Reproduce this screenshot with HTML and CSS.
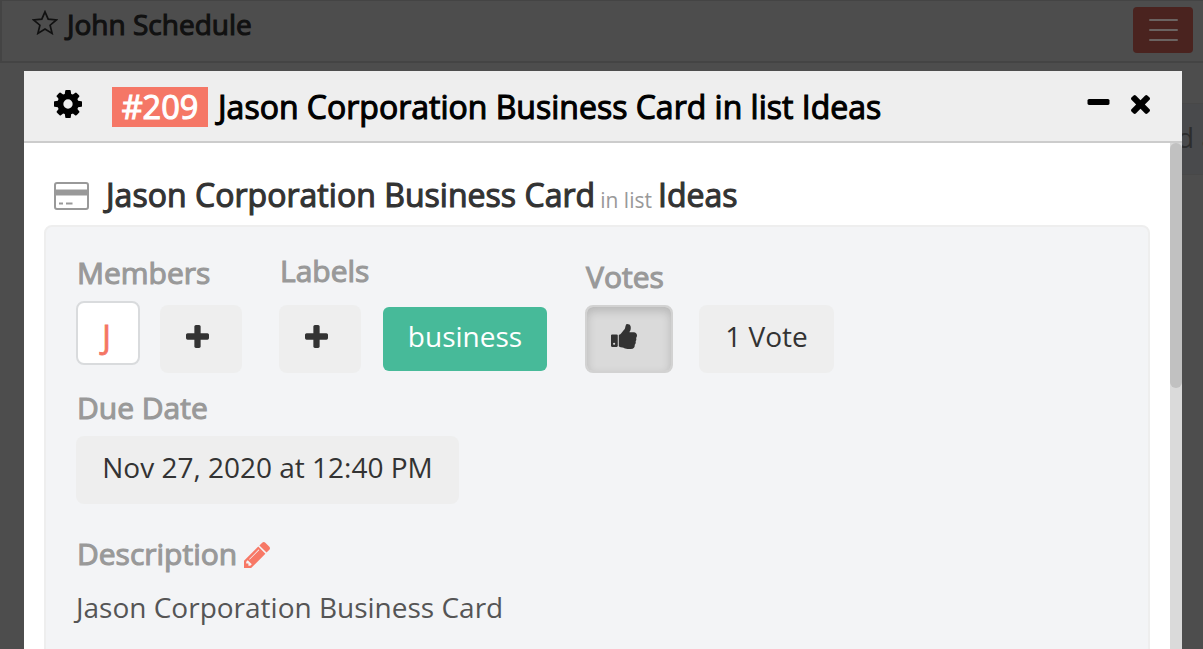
FILE: index.html
```html
<!DOCTYPE html>
<html lang="en">
<head>
<meta charset="utf-8">
<title>John Schedule</title>
<link rel="stylesheet" href="styles.css">
</head>
<body>
<svg class="defs" aria-hidden="true">
  <symbol id="plus" viewBox="192 128 1408 1408"><path d="M1600 736v192q0 40-28 68t-68 28h-416v416q0 40-28 68t-68 28h-192q-40 0-68-28t-28-68v-416h-416q-40 0-68-28t-28-68v-192q0-40 28-68t68-28h416v-416q0-40 28-68t68-28h192q40 0 68 28t28 68v416h416q40 0 68 28t28 68z"/></symbol>
</svg>
<div class="board">
  <header class="navbar">
    <div class="brand">
      <svg class="star" viewBox="0 0 26 25"><path d="M13 1.800l3.200 7.400 8.200.700-6.300 5.300 2 8.200-7.100-4.400-7.100 4.400 2-8.200L1.600 9.900l8.200-.7z"/></svg>
      <span class="strong brand-name">John Schedule</span>
    </div>
    <div class="menu"><i></i><i></i><i></i></div>
  </header>
  <div class="add-list"><span>d a</span></div>
</div>
<section class="modal">
  <header class="modal-head">
    <svg class="cog" viewBox="128 128 1536 1536"><path d="M1152 896q0-106-75-181t-181-75-181 75-75 181 75 181 181 75 181-75 75-181zm512-109v222q0 12-8 23t-20 13l-185 28q-19 54-39 91 35 50 107 138 10 12 10 25t-9 23q-27 37-99 108t-94 71q-12 0-26-9l-138-108q-44 23-91 38-16 136-29 186-7 28-36 28h-222q-14 0-24.500-8.500t-11.500-21.500l-28-184q-49-16-90-37l-141 107q-10 9-25 9-14 0-25-11-126-114-165-168-7-10-7-23 0-12 8-23 15-21 51-66.500t54-70.500q-27-50-41-99l-183-27q-13-2-21-12.500t-8-23.500v-222q0-12 8-23t19-13l186-28q14-46 39-92-40-57-107-138-10-12-10-24 0-10 9-23 26-36 98.500-107.500t94.500-71.500q13 0 26 10l138 107q44-23 91-38 16-136 29-186 7-28 36-28h222q14 0 24.500 8.500t11.500 21.500l28 184q49 16 90 37l142-107q9-9 24-9 13 0 25 10 129 119 165 170 7 8 7 22 0 12-8 23-15 21-51 66.500t-54 70.500q26 50 41 98l183 28q13 2 21 12.500t8 23.500z"/></svg>
    <span class="badge strong">#209</span>
    <h1 class="strong title">Jason Corporation Business Card in list Ideas</h1>
    <svg class="minus" viewBox="192 640 1408 384"><path d="M1600 736v192q0 40-28 68t-68 28h-1216q-40 0-68-28t-28-68v-192q0-40 28-68t68-28h1216q40 0 68 28t28 68z"/></svg>
    <svg class="times" viewBox="302 366 1188 1188"><path d="M1490 1322q0 40-28 68l-136 136q-28 28-68 28t-68-28l-294-294-294 294q-28 28-68 28t-68-28l-136-136q-28-28-28-68t28-68l294-294-294-294q-28-28-28-68t28-68l136-136q28-28 68-28t68 28l294 294 294-294q28-28 68-28t68 28l136 136q28 28 28 68t-28 68l-294 294 294 294q28 28 28 68z"/></svg>
  </header>
  <div class="modal-body">
    <div class="content">
      <div class="card-title">
        <svg class="card-icon" viewBox="0 0 35 28"><rect x="1" y="1" width="33" height="26" rx="2"/><path class="fill" d="M1 7.500h33v6H1zM5 20.500h4v2H5zM12 20.500h6.500v2H12z"/></svg>
        <h2 class="strong card-name">Jason Corporation Business Card</h2>
        <span class="in-list">in list</span>
        <span class="strong list-name">Ideas</span>
      </div>
      <div class="panel">
        <div class="groups">
          <div class="group members">
            <h3 class="strong label">Members</h3>
            <div class="row"><span class="avatar">J</span><span class="btn square"><svg class="plus"><use href="#plus"/></svg></span></div>
          </div>
          <div class="group labels">
            <h3 class="strong label">Labels</h3>
            <div class="row"><span class="btn square"><svg class="plus"><use href="#plus"/></svg></span><span class="tag">business</span></div>
          </div>
          <div class="group votes">
            <h3 class="strong label">Votes</h3>
            <div class="row"><span class="btn pressed"><svg class="thumb" viewBox="64 128 1600 1536"><path d="M320 1344q0-26-19-45t-45-19q-27 0-45.500 19t-18.500 45q0 27 18.500 45.500t45.500 18.500q26 0 45-18.500t19-45.500zm160-512v640q0 26-19 45t-45 19h-288q-26 0-45-19t-19-45v-640q0-26 19-45t45-19h288q26 0 45 19t19 45zm1184 0q0 86-55 149 15 44 15 76 3 76-43 137 17 56 0 117-15 57-54 94 9 112-49 181-64 76-197 78h-129q-66 0-144-15.500t-121.500-29-120.500-39.500q-123-43-158-44-26-1-45-19.500t-19-44.500v-641q0-25 18-43.500t43-20.500q24-2 76-59t101-121q68-87 101-120 18-18 31-48t17.500-48.500 13.500-60.500q7-39 12.500-61t19.500-52 34-50q19-19 45-19 46 0 82.500 10.500t60 26 40 40.500 24 45 12 50 5 45 .5 39q0 38-9.500 76t-19 60-27.500 56q-3 6-10 18t-11 22-8 24h277q78 0 135 57t57 135z"/></svg></span><span class="btn count">1 Vote</span></div>
          </div>
        </div>
        <h3 class="strong label due-label">Due Date</h3>
        <span class="btn due">Nov 27, 2020 at 12:40 PM</span>
        <div class="desc-head">
          <h3 class="strong label desc-label">Description</h3>
          <svg class="pencil" viewBox="128 149 1515 1515"><path d="M491 1536l91-91-235-235-91 91v107h128v128h107zm523-928q0-22-22-22-10 0-17 7l-542 542q-7 7-7 17 0 22 22 22 10 0 17-7l542-542q7-7 7-17zm-54-192l416 416-832 832h-416v-416zm683 96q0 53-37 90l-166 166-416-416 166-165q36-38 90-38 53 0 91 38l235 234q37 39 37 91z"/></svg>
        </div>
        <p class="desc">Jason Corporation Business Card</p>
      </div>
    </div>
    <div class="scrollbar"><div class="scroll-thumb"></div></div>
  </div>
</section>
</body>
</html>
```
FILE: styles.css
```css
* { box-sizing: border-box; }
body {
  margin: 0;
  width: 1203px;
  height: 649px;
  overflow: hidden;
  position: relative;
  background: #4d4d4d;
  font: 28px/40px "Open Sans", sans-serif;
  color: #333;
}
h1, h2, h3, p { margin: 0; }
svg { display: block; flex: none; fill: currentColor; }
.defs { position: absolute; width: 0; height: 0; }
.strong { font-weight: 400; -webkit-text-stroke: 1.1px currentColor; white-space: nowrap; }

.board { height: 649px; overflow: hidden; }
.navbar {
  display: flex;
  justify-content: space-between;
  height: 63px;
  border: solid #444;
  border-width: 1px 0 2px 2px;
  padding: 6px 10px 0 30px;
}
.brand { display: flex; color: #111; }
.star { width: 26px; height: 25px; margin-top: 3px; fill: none; stroke: currentColor; stroke-width: 1.7; }
.brand-name { margin-left: 9px; margin-top: -3px; font-size: 28px; }
.menu {
  width: 60px;
  height: 46px;
  border-radius: 4px;
  background: #4a231f;
  display: flex;
  flex-direction: column;
  align-items: center;
  gap: 8px;
  padding-top: 12px;
}
.menu i { width: 29px; height: 2px; border-radius: 1px; background: #6b6361; }
.add-list {
  width: 180px;
  height: 72px;
  margin: 40px 0 0 1023px;
  padding: 13px 0 0 154px;
  border: solid #484848;
  border-width: 1px 0;
  background: #494a4c;
  color: #2d2d2d;
  white-space: nowrap;
}

.modal { position: absolute; left: 24px; top: 71px; width: 1158px; height: 578px; background: #fff; overflow: hidden; }
.modal-head {
  display: flex;
  align-items: flex-start;
  height: 72px;
  padding: 0 32px 0 30px;
  background: #eee;
  border-bottom: 2px solid #ccc;
  color: #000;
}
.cog { width: 28px; height: 28px; margin-top: 19px; }
.badge { width: 96px; height: 40px; margin: 16px 0 0 30px; background: #f57766; color: #fff; text-align: center; font-size: 32.5px; line-height: 40px; }
.title { margin: 16px auto 0 10px; font-size: 32px; line-height: 40px; }
.minus { width: 23px; height: 6px; margin-top: 28px; }
.times { width: 19px; height: 19px; margin: 24px 0 0 21px; }

.modal-body { display: flex; height: 506px; }
.content { flex: 1; padding: 31px 20px 0 20px; }
.card-title { display: flex; height: 51px; padding-left: 10px; }
.card-icon { width: 35px; height: 28px; margin-top: 8px; fill: none; stroke: #999; stroke-width: 2; }
.card-icon .fill { fill: #999; stroke: none; }
.card-name { margin-left: 17px; font-size: 32px; line-height: 42px; letter-spacing: .03px; }
.in-list { margin: 8px 0 0 5px; font-size: 21px; line-height: 36px; color: #999; white-space: nowrap; }
.list-name { margin-left: 6px; font-size: 32px; line-height: 42px; }
.panel { height: 440px; padding: 0 0 0 30px; border: 2px solid #eee; border-radius: 8px; background: #f3f4f6; }
.groups { display: flex; align-items: flex-start; height: 146px; padding-top: 26px; }
.label { padding-left: 1px; font-size: 30px; line-height: 40px; color: #999; }
.members { width: 203px; }
.labels { width: 306px; }
.members .label { height: 48px; }
.labels .label { margin-top: -2px; height: 54px; }
.votes .label { margin-top: 4px; height: 48px; }
.row { display: flex; align-items: flex-start; }
.avatar { width: 64px; height: 64px; border: 2px solid #d9dbdd; border-radius: 8px; background: #fff; color: #f47564; text-align: center; font-size: 32px; padding: 14px 3px 0 0; -webkit-text-stroke: .8px currentColor; }
.btn { display: block; height: 68px; border-radius: 8px; background: #eee; white-space: nowrap; line-height: 40px; padding-top: 11px; }
.square { width: 82px; padding: 20px 0 0 26px; }
.members .square { margin: 4px 0 0 20px; }
.plus { width: 23px; height: 23px; }
.tag { width: 164px; height: 64px; margin: 2px 0 0 22px; padding-top: 9px; border-radius: 6px; background: #47ba99; color: #fff; text-align: center; }
.pressed { width: 88px; border: 2px solid #d2d2d2; background: #dadada; box-shadow: inset 0 4px 10px rgba(0, 0, 0, .16); padding: 17px 0 0 24px; }
.thumb { width: 26px; height: 25px; }
.count { width: 135px; margin-left: 26px; text-align: center; }
.due-label { margin-top: 15px; }
.due { width: 383px; margin-top: 8px; text-align: center; }
.desc-head { display: flex; margin-top: 30px; }
.pencil { width: 26px; height: 26px; margin: 8px 0 0 7px; color: #f77866; }
.desc { margin-top: 13px; color: #555; }
.scrollbar { width: 12px; background: #dadada; }
.scroll-thumb { height: 245px; border-radius: 6px; background: #c1c1c1; }
```
